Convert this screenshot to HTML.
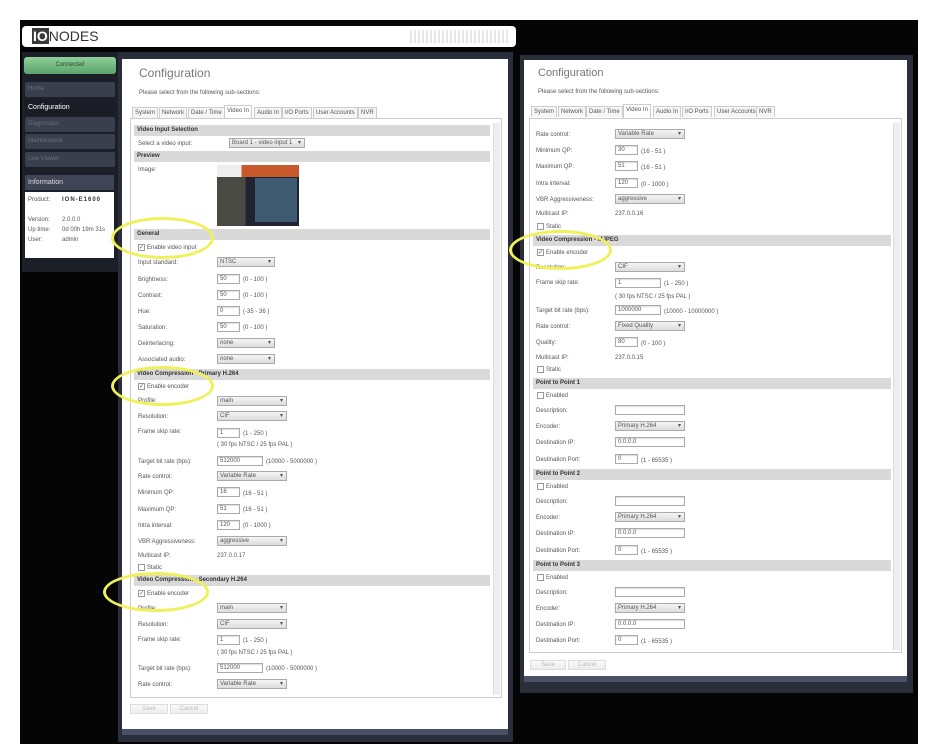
<!DOCTYPE html>
<html><head><meta charset="utf-8"><style>
*{margin:0;padding:0;box-sizing:border-box}
body{width:925px;height:751px;background:#fff;position:relative;overflow:hidden;font-family:"Liberation Sans",sans-serif;font-size:6px;color:#555}
div,span{position:absolute}
.l{white-space:nowrap;line-height:8px}
.h{height:11px;background:#d9d9d9;font-weight:bold;color:#333;padding-left:3px;line-height:11px;white-space:nowrap}
.i{height:10px;border:1px solid #aaa;background:#fff;padding-left:2px;line-height:8px;box-shadow:inset 0 1px 1px #ddd}
.s{height:10px;border:1px solid #aaa;background:linear-gradient(#f4f4f4,#dcdcdc);padding-left:2px;line-height:8px}
.s:after{content:"▾";position:absolute;right:3px;top:0;font-size:6px}
.b{height:10px;border:1px solid #ddd;background:linear-gradient(#fafafa,#ececec);line-height:8px;text-align:center;color:#bbb}
.c{width:7px;height:7px;border:1px solid #999;background:#fff;font-size:6px;line-height:6px;text-align:center}
.ov{border:3px solid #f0f05a;border-radius:50%}
.tab{top:107px;height:11px;border:1px solid #ccc;border-bottom:none;background:#f6f6f6;line-height:10px;padding:0 2px;white-space:nowrap}
.nav{left:25px;width:90px;height:15px;background:#3a3f4d;color:#6a7080;line-height:15px;padding-left:3px;border-radius:2px}
</style></head><body>
<div style="left:20px;top:20px;width:898px;height:724px;background:#050505"></div>
<div style="left:22px;top:26px;width:494px;height:21px;background:#fff;border-radius:4px"></div>
<div style="left:32px;top:29px;font-size:14px;color:#333;line-height:15px;white-space:nowrap"><span style="position:relative;background:#3a3a3a;color:#fff;padding:0 1px;font-weight:bold">IO</span>NODES</div>
<div style="left:410px;top:30px;width:100px;height:13px;background:repeating-linear-gradient(90deg,#ddd 0 2px,#fff 2px 4px);opacity:.7"></div>
<!-- sidebar -->
<div style="left:22px;top:52px;width:96px;height:220px;background:#1c1f27"></div>
<div style="left:24px;top:57px;width:92px;height:17px;background:linear-gradient(#8fcf9a,#5aa36a);border-radius:3px;color:#2d4a30;text-align:center;line-height:17px">Connected</div>
<div class="nav" style="top:82px">Home</div>
<div class="nav" style="top:100px;background:#1a1d26;color:#fff;font-size:7px">Configuration</div>
<div class="nav" style="top:117px">Diagnostics</div>
<div class="nav" style="top:134px">Maintenance</div>
<div class="nav" style="top:152px">Live Viewer</div>
<div style="left:25px;top:175px;width:89px;height:15px;background:#3f4554;color:#ddd;line-height:15px;padding-left:3px;font-size:7px">Information</div>
<div style="left:25px;top:192px;width:89px;height:66px;background:#fff"></div>
<div class="l" style="left:28px;top:196px">Product:</div><div class="l" style="left:62px;top:196px;font-weight:bold;letter-spacing:1px;color:#333">ION-E1600</div>
<div class="l" style="left:28px;top:216px">Version:</div><div class="l" style="left:62px;top:216px">2.0.0.0</div>
<div class="l" style="left:28px;top:226px">Up time:</div><div class="l" style="left:62px;top:226px">0d 00h 19m 31s</div>
<div class="l" style="left:28px;top:236px">User:</div><div class="l" style="left:62px;top:236px">admin</div>
<!-- left panel -->
<div style="left:118px;top:52px;width:395px;height:690px;background:#2a2e3a"></div>
<div style="left:122px;top:59px;width:386px;height:670px;background:#fff"></div>
<div class="l" style="left:139px;top:67px;font-size:12px;line-height:13px;color:#777">Configuration</div>
<div class="l" style="left:139px;top:89px">Please select from the following sub-sections:</div>
<div class="tab" style="left:132px">System</div><div class="tab" style="left:159px">Network</div><div class="tab" style="left:188px">Date / Time</div><div class="tab" style="left:224px;top:105px;height:13px;background:#fff">Video In</div><div class="tab" style="left:254px">Audio In</div><div class="tab" style="left:282px">I/O Ports</div><div class="tab" style="left:313px">User Accounts</div><div class="tab" style="left:358px">NVR</div>
<div style="left:130px;top:118px;width:372px;height:580px;border:1px solid #ccc"></div>
<div style="left:493px;top:123px;width:7px;height:572px;background:#eee;border-left:1px solid #ddd"></div>
<div class="h" style="left:134px;top:125px;width:356px">Video Input Selection</div>
<div class="l" style="left:138px;top:140px">Select a video input:</div><div class="s" style="left:229px;top:138px;width:76px">Board 1 - video input 1</div>
<div class="h" style="left:134px;top:151px;width:356px">Preview</div>
<div class="l" style="left:138px;top:166px">Image:</div>
<div style="left:217px;top:165px;width:82px;height:61px;background:linear-gradient(90deg,#4a4a44 0 35%,#223 35% 100%)"></div>
<div style="left:217px;top:165px;width:82px;height:12px;background:linear-gradient(90deg,#eee 0 30%,#c8592a 30% 100%)"></div>
<div style="left:255px;top:178px;width:42px;height:44px;background:#3d5a70"></div>
<div class="h" style="left:134px;top:229px;width:356px">General</div>
<div class="c" style="left:138px;top:244px">✓</div><div class="l" style="left:147px;top:244px">Enable video input</div>
<div class="l" style="left:138px;top:259px">Input standard:</div><div class="s" style="left:217px;top:257px;width:58px">NTSC</div>
<div class="l" style="left:138px;top:276px">Brightness:</div><div class="i" style="left:217px;top:274px;width:23px">50</div><div class="l" style="left:243px;top:276px">(0 - 100 )</div>
<div class="l" style="left:138px;top:292px">Contrast:</div><div class="i" style="left:217px;top:290px;width:23px">50</div><div class="l" style="left:243px;top:292px">(0 - 100 )</div>
<div class="l" style="left:138px;top:308px">Hue:</div><div class="i" style="left:217px;top:306px;width:23px">0</div><div class="l" style="left:243px;top:308px">(-35 - 36 )</div>
<div class="l" style="left:138px;top:324px">Saturation:</div><div class="i" style="left:217px;top:322px;width:23px">50</div><div class="l" style="left:243px;top:324px">(0 - 100 )</div>
<div class="l" style="left:138px;top:340px">Deinterlacing:</div><div class="s" style="left:217px;top:338px;width:58px">none</div>
<div class="l" style="left:138px;top:356px">Associated audio:</div><div class="s" style="left:217px;top:354px;width:58px">none</div>
<div class="h" style="left:134px;top:369px;width:356px">Video Compression - Primary H.264</div>
<div class="c" style="left:138px;top:383px">✓</div><div class="l" style="left:147px;top:383px">Enable encoder</div>
<div class="l" style="left:138px;top:397px">Profile:</div><div class="s" style="left:217px;top:396px;width:70px">main</div>
<div class="l" style="left:138px;top:413px">Resolution:</div><div class="s" style="left:217px;top:411px;width:70px">CIF</div>
<div class="l" style="left:138px;top:428px">Frame skip rate:</div><div class="i" style="left:217px;top:428px;width:23px">1</div><div class="l" style="left:243px;top:430px">(1 - 250 )</div>
<div class="l" style="left:217px;top:441px">( 30 fps NTSC / 25 fps PAL )</div>
<div class="l" style="left:138px;top:458px">Target bit rate (bps):</div><div class="i" style="left:217px;top:456px;width:46px">512000</div><div class="l" style="left:266px;top:458px">(10000 - 5000000 )</div>
<div class="l" style="left:138px;top:473px">Rate control:</div><div class="s" style="left:217px;top:471px;width:70px">Variable Rate</div>
<div class="l" style="left:138px;top:489px">Minimum QP:</div><div class="i" style="left:217px;top:487px;width:23px">16</div><div class="l" style="left:243px;top:490px">(16 - 51 )</div>
<div class="l" style="left:138px;top:506px">Maximum QP:</div><div class="i" style="left:217px;top:504px;width:23px">51</div><div class="l" style="left:243px;top:506px">(16 - 51 )</div>
<div class="l" style="left:138px;top:522px">Intra interval:</div><div class="i" style="left:217px;top:520px;width:23px">120</div><div class="l" style="left:243px;top:522px">(0 - 1000 )</div>
<div class="l" style="left:138px;top:538px">VBR Aggressiveness:</div><div class="s" style="left:217px;top:536px;width:70px">aggressive</div>
<div class="l" style="left:138px;top:552px">Multicast IP:</div><div class="l" style="left:217px;top:552px">237.0.0.17</div>
<div class="c" style="left:138px;top:564px"></div><div class="l" style="left:147px;top:564px">Static</div>
<div class="h" style="left:134px;top:575px;width:356px">Video Compression - Secondary H.264</div>
<div class="c" style="left:138px;top:590px">✓</div><div class="l" style="left:147px;top:590px">Enable encoder</div>
<div class="l" style="left:138px;top:605px">Profile:</div><div class="s" style="left:217px;top:603px;width:70px">main</div>
<div class="l" style="left:138px;top:621px">Resolution:</div><div class="s" style="left:217px;top:619px;width:70px">CIF</div>
<div class="l" style="left:138px;top:636px">Frame skip rate:</div><div class="i" style="left:217px;top:635px;width:23px">1</div><div class="l" style="left:243px;top:637px">(1 - 250 )</div>
<div class="l" style="left:217px;top:649px">( 30 fps NTSC / 25 fps PAL )</div>
<div class="l" style="left:138px;top:665px">Target bit rate (bps):</div><div class="i" style="left:217px;top:663px;width:46px">512000</div><div class="l" style="left:266px;top:665px">(10000 - 5000000 )</div>
<div class="l" style="left:138px;top:681px">Rate control:</div><div class="s" style="left:217px;top:679px;width:70px">Variable Rate</div>
<div class="b" style="left:130px;top:704px;width:38px">Save</div>
<div class="b" style="left:170px;top:704px;width:38px">Cancel</div>
<div style="left:122px;top:729px;width:386px;height:6px;background:#4a5166"></div>
<!-- right panel -->
<div style="left:520px;top:55px;width:393px;height:638px;background:#2a2e3a"></div>
<div style="left:524px;top:60px;width:383px;height:616px;background:#fff"></div>
<div class="l" style="left:538px;top:67px;font-size:11px;line-height:12px;color:#777">Configuration</div>
<div class="l" style="left:538px;top:88px">Please select from the following sub-sections:</div>
<div class="tab" style="left:531px;top:106px">System</div><div class="tab" style="left:558px;top:106px">Network</div><div class="tab" style="left:586px;top:106px">Date / Time</div><div class="tab" style="left:623px;top:104px;height:14px;background:#fff">Video In</div><div class="tab" style="left:653px;top:106px">Audio In</div><div class="tab" style="left:682px;top:106px">I/O Ports</div><div class="tab" style="left:714px;top:106px">User Accounts</div><div class="tab" style="left:756px;top:106px">NVR</div>
<div style="left:529px;top:118px;width:373px;height:535px;border:1px solid #ccc"></div>
<div style="left:893px;top:123px;width:7px;height:527px;background:#eee;border-left:1px solid #ddd"></div>
<div class="l" style="left:536px;top:131px">Rate control:</div><div class="s" style="left:615px;top:129px;width:70px">Variable Rate</div>
<div class="l" style="left:536px;top:147px">Minimum QP:</div><div class="i" style="left:615px;top:145px;width:23px">30</div><div class="l" style="left:641px;top:148px">(16 - 51 )</div>
<div class="l" style="left:536px;top:163px">Maximum QP:</div><div class="i" style="left:615px;top:161px;width:23px">51</div><div class="l" style="left:641px;top:164px">(16 - 51 )</div>
<div class="l" style="left:536px;top:180px">Intra interval:</div><div class="i" style="left:615px;top:178px;width:23px">120</div><div class="l" style="left:641px;top:181px">(0 - 1000 )</div>
<div class="l" style="left:536px;top:196px">VBR Aggressiveness:</div><div class="s" style="left:615px;top:194px;width:70px">aggressive</div>
<div class="l" style="left:536px;top:210px">Multicast IP:</div><div class="l" style="left:615px;top:210px">237.0.0.16</div>
<div class="c" style="left:537px;top:223px"></div><div class="l" style="left:546px;top:223px">Static</div>
<div class="h" style="left:533px;top:235px;width:358px">Video Compression - MJPEG</div>
<div class="c" style="left:537px;top:249px">✓</div><div class="l" style="left:546px;top:249px">Enable encoder</div>
<div class="l" style="left:536px;top:264px">Resolution:</div><div class="s" style="left:615px;top:262px;width:70px">CIF</div>
<div class="l" style="left:536px;top:279px">Frame skip rate:</div><div class="i" style="left:615px;top:278px;width:46px">1</div><div class="l" style="left:664px;top:280px">(1 - 250 )</div>
<div class="l" style="left:615px;top:293px">( 30 fps NTSC / 25 fps PAL )</div>
<div class="l" style="left:536px;top:307px">Target bit rate (bps):</div><div class="i" style="left:615px;top:305px;width:46px">1000000</div><div class="l" style="left:664px;top:308px">(10000 - 10000000 )</div>
<div class="l" style="left:536px;top:323px">Rate control:</div><div class="s" style="left:615px;top:321px;width:70px">Fixed Quality</div>
<div class="l" style="left:536px;top:339px">Quality:</div><div class="i" style="left:615px;top:337px;width:23px">80</div><div class="l" style="left:641px;top:340px">(0 - 100 )</div>
<div class="l" style="left:536px;top:354px">Multicast IP:</div><div class="l" style="left:615px;top:354px">237.0.0.15</div>
<div class="c" style="left:537px;top:366px"></div><div class="l" style="left:546px;top:366px">Static</div>
<div class="h" style="left:533px;top:378px;width:358px">Point to Point 1</div>
<div class="c" style="left:537px;top:392px"></div><div class="l" style="left:546px;top:392px">Enabled</div>
<div class="l" style="left:536px;top:407px">Description:</div><div class="i" style="left:615px;top:405px;width:70px"></div>
<div class="l" style="left:536px;top:423px">Encoder:</div><div class="s" style="left:615px;top:421px;width:70px">Primary H.264</div>
<div class="l" style="left:536px;top:439px">Destination IP:</div><div class="i" style="left:615px;top:437px;width:70px">0.0.0.0</div>
<div class="l" style="left:536px;top:456px">Destination Port:</div><div class="i" style="left:615px;top:454px;width:23px">0</div><div class="l" style="left:641px;top:457px">(1 - 65535 )</div>
<div class="h" style="left:533px;top:469px;width:358px">Point to Point 2</div>
<div class="c" style="left:537px;top:483px"></div><div class="l" style="left:546px;top:483px">Enabled</div>
<div class="l" style="left:536px;top:498px">Description:</div><div class="i" style="left:615px;top:496px;width:70px"></div>
<div class="l" style="left:536px;top:514px">Encoder:</div><div class="s" style="left:615px;top:512px;width:70px">Primary H.264</div>
<div class="l" style="left:536px;top:530px">Destination IP:</div><div class="i" style="left:615px;top:528px;width:70px">0.0.0.0</div>
<div class="l" style="left:536px;top:547px">Destination Port:</div><div class="i" style="left:615px;top:545px;width:23px">0</div><div class="l" style="left:641px;top:548px">(1 - 65535 )</div>
<div class="h" style="left:533px;top:560px;width:358px">Point to Point 3</div>
<div class="c" style="left:537px;top:574px"></div><div class="l" style="left:546px;top:574px">Enabled</div>
<div class="l" style="left:536px;top:589px">Description:</div><div class="i" style="left:615px;top:587px;width:70px"></div>
<div class="l" style="left:536px;top:605px">Encoder:</div><div class="s" style="left:615px;top:603px;width:70px">Primary H.264</div>
<div class="l" style="left:536px;top:621px">Destination IP:</div><div class="i" style="left:615px;top:619px;width:70px">0.0.0.0</div>
<div class="l" style="left:536px;top:637px">Destination Port:</div><div class="i" style="left:615px;top:635px;width:23px">0</div><div class="l" style="left:641px;top:638px">(1 - 65535 )</div>
<div class="b" style="left:530px;top:660px;width:36px">Save</div>
<div class="b" style="left:568px;top:660px;width:38px">Cancel</div>
<div style="left:524px;top:676px;width:383px;height:6px;background:#4a5166"></div>
<!-- yellow ellipses -->
<div class="ov" style="left:111px;top:217px;width:103px;height:42px"></div>
<div class="ov" style="left:111px;top:366px;width:103px;height:40px"></div>
<div class="ov" style="left:103px;top:572px;width:106px;height:40px"></div>
<div class="ov" style="left:509px;top:230px;width:103px;height:40px"></div>
</body></html>
